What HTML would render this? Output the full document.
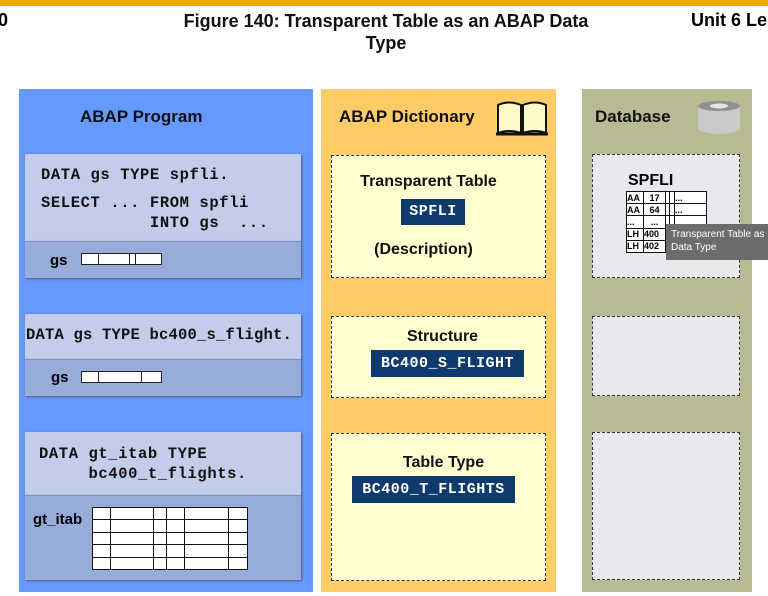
<!DOCTYPE html>
<html><head><meta charset="utf-8"><style>
*{margin:0;padding:0;box-sizing:border-box}
body{width:768px;height:596px;background:#fff;position:relative;overflow:hidden;font-family:"Liberation Sans",Arial,sans-serif}
.a{position:absolute}
.h{font-weight:bold;font-size:17px;color:#111}
.code{font-family:"Liberation Mono",monospace;font-weight:bold;font-size:15.5px;color:#111;white-space:pre;letter-spacing:0.6px}
.lt{background:#c3cde9}
.dk{background:#98acd9;border-top:1px solid #7f93c4}
.dash{border:1px dashed #333}
.navy{background:#0e3a6e;color:#fff;font-family:"Liberation Mono",monospace;font-weight:bold;font-size:15px;text-align:center;letter-spacing:0.5px}
.t{font-weight:bold;font-size:16px;color:#111;text-align:center}
table{border-collapse:collapse}
td{border:1px solid #111;background:#fff}
</style></head><body>
<div class="a" style="left:0;top:0;width:768px;height:6px;background:#f2a900"></div>
<div class="a" style="left:-2px;top:10px;font-size:18px;font-weight:bold">0</div>
<div class="a" style="left:150px;top:10px;width:472px;text-align:center;font-size:18px;font-weight:bold;line-height:22px;color:#111">Figure 140: Transparent Table as an ABAP Data<br>Type</div>
<div class="a" style="left:691px;top:10px;font-size:18px;font-weight:bold;white-space:nowrap">Unit 6 Le</div>

<div class="a" style="left:19px;top:89px;width:294px;height:503px;background:#6699fe"></div>
<div class="a h" style="left:80px;top:107px">ABAP Program</div>
<div class="a lt" style="left:25px;top:154px;width:276px;height:87px;box-shadow:1px 1px 2px #557"></div>
<div class="a dk" style="left:25px;top:241px;width:276px;height:37px;box-shadow:1px 1px 2px #557"></div>
<div class="a code" style="left:41px;top:166px">DATA gs TYPE spfli.</div>
<div class="a code" style="left:41px;top:193px;line-height:20px">SELECT ... FROM spfli
           INTO gs  ...</div>
<div class="a" style="left:50px;top:252px;font-weight:bold;font-size:15px">gs</div>
<div class="a" style="left:81px;top:253px;width:81px;height:12px;background:#fff;border:1px solid #222"></div>
<div class="a" style="left:98px;top:253px;width:1px;height:12px;background:#222"></div>
<div class="a" style="left:129px;top:253px;width:1px;height:12px;background:#222"></div>
<div class="a" style="left:135px;top:253px;width:1px;height:12px;background:#222"></div>

<div class="a lt" style="left:25px;top:314px;width:276px;height:45px;box-shadow:1px 1px 2px #557"></div>
<div class="a dk" style="left:25px;top:359px;width:276px;height:37px;box-shadow:1px 1px 2px #557"></div>
<div class="a code" style="left:26px;top:326px;letter-spacing:0.2px">DATA gs TYPE bc400_s_flight.</div>
<div class="a" style="left:51px;top:369px;font-weight:bold;font-size:15px">gs</div>
<div class="a" style="left:81px;top:371px;width:81px;height:12px;background:#fff;border:1px solid #222"></div>
<div class="a" style="left:98px;top:371px;width:1px;height:12px;background:#222"></div>
<div class="a" style="left:141px;top:371px;width:1px;height:12px;background:#222"></div>

<div class="a lt" style="left:25px;top:432px;width:276px;height:63px;box-shadow:1px 1px 2px #557"></div>
<div class="a dk" style="left:25px;top:495px;width:276px;height:85px;box-shadow:1px 1px 2px #557"></div>
<div class="a code" style="left:39px;top:444px;line-height:20px">DATA gt_itab TYPE
     bc400_t_flights.</div>
<div class="a" style="left:33px;top:511px;font-weight:bold;font-size:15px">gt_itab</div>
<table class="a" style="left:92px;top:507px;width:156px;height:63px">
<tr><td style="width:18px"></td><td style="width:43px"></td><td style="width:13px"></td><td style="width:18px"></td><td style="width:44px"></td><td></td></tr>
<tr><td></td><td></td><td></td><td></td><td></td><td></td></tr>
<tr><td></td><td></td><td></td><td></td><td></td><td></td></tr>
<tr><td></td><td></td><td></td><td></td><td></td><td></td></tr>
<tr><td></td><td></td><td></td><td></td><td></td><td></td></tr>
</table>

<div class="a" style="left:321px;top:89px;width:235px;height:503px;background:#fecc67"></div>
<div class="a h" style="left:339px;top:107px">ABAP Dictionary</div>
<svg class="a" style="left:495px;top:99px" width="54" height="38" viewBox="0 0 54 38">
<path d="M3 6 Q14 1 26 6 L26 34 Q14 30 3 34 Z" fill="#fffbc8" stroke="#111" stroke-width="2"/>
<path d="M28 6 Q40 1 51 6 L51 34 Q40 30 28 34 Z" fill="#fffbc8" stroke="#111" stroke-width="2"/>
<path d="M1 35 L53 35" stroke="#111" stroke-width="3"/>
</svg>
<div class="a dash" style="left:331px;top:155px;width:215px;height:123px;background:#ffffd2"></div>
<div class="a t" style="left:331px;top:173px;width:215px;padding-right:20px">Transparent Table</div>
<div class="a navy" style="left:401px;top:199px;width:64px;height:26px;line-height:26px">SPFLI</div>
<div class="a t" style="left:331px;top:241px;width:215px;padding-right:30px">(Description)</div>
<div class="a dash" style="left:331px;top:316px;width:215px;height:82px;background:#ffffd2"></div>
<div class="a t" style="left:331px;top:328px;width:215px;padding-left:8px">Structure</div>
<div class="a navy" style="left:371px;top:350px;width:153px;height:27px;line-height:27px">BC400_S_FLIGHT</div>
<div class="a dash" style="left:331px;top:433px;width:215px;height:148px;background:#ffffd2"></div>
<div class="a t" style="left:331px;top:454px;width:215px;padding-left:10px">Table Type</div>
<div class="a navy" style="left:352px;top:476px;width:163px;height:27px;line-height:27px">BC400_T_FLIGHTS</div>

<div class="a" style="left:582px;top:89px;width:170px;height:503px;background:#b8bb92"></div>
<div class="a h" style="left:595px;top:107px">Database</div>
<svg class="a" style="left:696px;top:100px" width="46" height="36" viewBox="0 0 46 36">
<path d="M2 6 L2 30 Q23 38 44 30 L44 6 Z" fill="#c9c9c9"/>
<ellipse cx="23" cy="6" rx="21" ry="5" fill="#909090"/>
<ellipse cx="23" cy="6" rx="9" ry="2.5" fill="#e4e4f0"/>
</svg>
<div class="a dash" style="left:592px;top:154px;width:148px;height:124px;background:#e9e8ec"></div>
<div class="a" style="left:628px;top:172px;font-weight:bold;font-size:16px">SPFLI</div>
<table class="a" style="left:626px;top:191px;width:81px;height:62px;font-size:9px;font-weight:bold;line-height:10px">
<tr><td style="width:17px">AA</td><td style="width:22px;text-align:center">17</td><td style="width:4px"></td><td style="width:5px"></td><td>...</td></tr>
<tr><td>AA</td><td style="text-align:center">64</td><td></td><td></td><td>...</td></tr>
<tr><td>...</td><td style="text-align:center">...</td><td></td><td></td><td></td></tr>
<tr><td>LH</td><td>400</td><td></td><td></td><td></td></tr>
<tr><td>LH</td><td>402</td><td></td><td></td><td></td></tr>
</table>
<div class="a" style="left:666px;top:224px;width:102px;height:36px;background:#6c6c6c;color:#fff;font-size:10px;line-height:13px;padding:4px 0 0 5px;white-space:nowrap">Transparent Table as<br>Data Type</div>
<div class="a dash" style="left:592px;top:316px;width:148px;height:80px;background:#e9e8ec"></div>
<div class="a dash" style="left:592px;top:432px;width:148px;height:148px;background:#e9e8ec"></div>
</body></html>
